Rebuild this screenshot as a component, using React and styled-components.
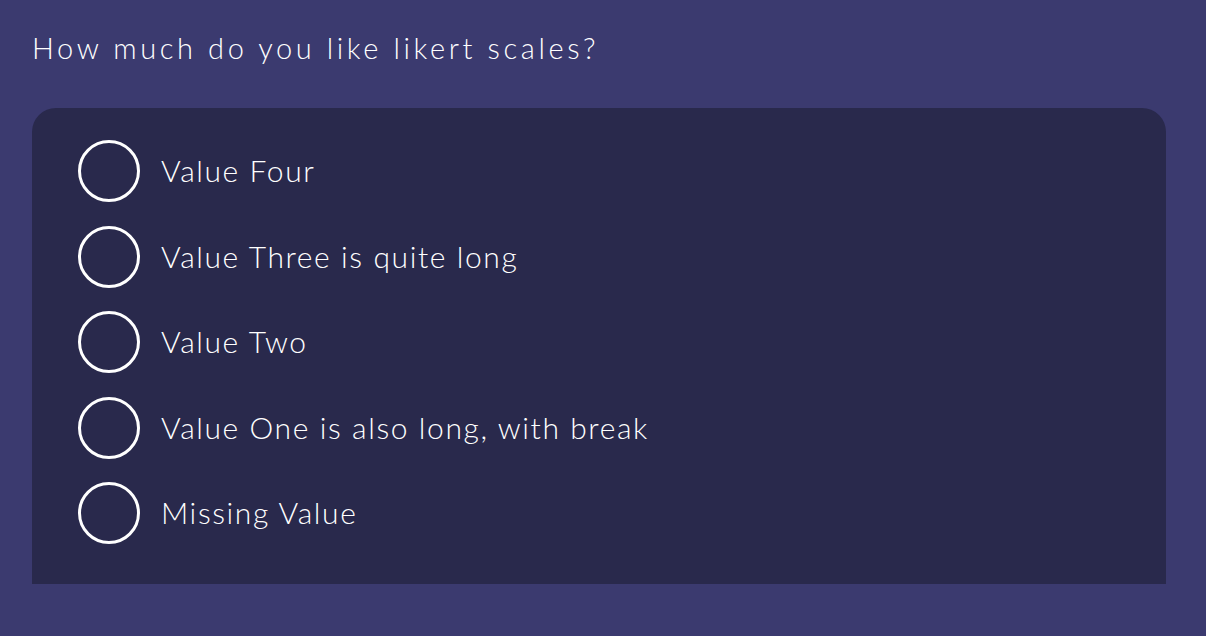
import React from 'react'
import styled, { createGlobalStyle } from 'styled-components'

const GlobalStyle = createGlobalStyle`
  html, body {
    margin: 0;
    padding: 0;
    background: #3b3a6f;
  }
  body {
    font-family: Lato, "Noto Sans", sans-serif;
    color: #ffffff;
  }
`

const Page = styled.div`
  padding: 24px 40px 52px 32px;
  min-height: 636px;
  box-sizing: border-box;
`

const Question = styled.h1`
  margin: 0 0 36px 0;
  font-size: 29px;
  font-weight: 300;
  letter-spacing: 3.6px;
  line-height: 48px;
`

const Panel = styled.div`
  background: #29294c;
  border-radius: 24px 24px 0 0;
  padding: 32px 46px 40px 46px;
  display: flex;
  flex-direction: column;
  gap: 23.5px;
`

const Option = styled.label`
  display: flex;
  align-items: center;
  gap: 21px;
  cursor: pointer;
`

const Radio = styled.span`
  width: 62px;
  height: 62px;
  box-sizing: border-box;
  border-radius: 50%;
  border: 3.5px solid #ffffff;
  flex-shrink: 0;
`

const Label = styled.span`
  font-size: 30px;
  line-height: 34px;
  padding-bottom: 2px;
  font-weight: 300;
  letter-spacing: 1.6px;
`

const options = [
  'Value Four',
  'Value Three is quite long',
  'Value Two',
  'Value One is also long, with break',
  'Missing Value',
]

export default function App() {
  return (
    <>
      <GlobalStyle />
      <Page>
        <Question>How much do you like likert scales?</Question>
        <Panel>
          {options.map((o) => (
            <Option key={o}>
              <Radio />
              <Label>{o}</Label>
            </Option>
          ))}
        </Panel>
      </Page>
    </>
  )
}
